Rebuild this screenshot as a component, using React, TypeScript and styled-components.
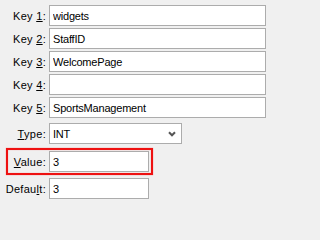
import React from "react";
import styled, { createGlobalStyle } from "styled-components";

const GlobalStyle = createGlobalStyle`
  html, body {
    margin: 0;
    padding: 0;
    background: #f0f0f0;
  }
  body {
    font-family: "Liberation Sans", Arial, sans-serif;
    font-size: 11px;
    color: #000;
  }
`;

type Field = { label: React.ReactNode; value: string };

const keys: Field[] = [
  { label: <>Key <u>1</u>:</>, value: "widgets" },
  { label: <>Key <u>2</u>:</>, value: "StaffID" },
  { label: <>Key <u>3</u>:</>, value: "WelcomePage" },
  { label: <>Key <u>4</u>:</>, value: "" },
  { label: <>Key <u>5</u>:</>, value: "SportsManagement" },
];

const App = () => {
  return (
    <>
      <GlobalStyle />
      <Form>
        {keys.map((k, i) => (
          <Row key={i} $top={i === 0 ? 5 : 2}>
            <Label>{k.label}</Label>
            <TextBox $width={217} defaultValue={k.value} />
          </Row>
        ))}
        <Row $top={5}>
          <Label>
            <u>T</u>ype:
          </Label>
          <Select>
            <span>INT</span>
            <svg width="8" height="6" viewBox="0 0 8 6">
              <path d="M1 1.2 L4 4.3 L7 1.2" fill="none" stroke="#555" strokeWidth="2" />
            </svg>
          </Select>
        </Row>
        <Row $top={7} $highlight>
          <Label>
            <u>V</u>alue:
          </Label>
          <TextBox $width={100} defaultValue="3" />
        </Row>
        <Row $top={6}>
          <Label>
            Defau<u>l</u>t:
          </Label>
          <TextBox $width={100} defaultValue="3" />
        </Row>
      </Form>
    </>
  );
};
export default App;

// styled-components -----------------
const Form = styled.div`
  display: flex;
  flex-direction: column;
  width: 271px;
`;

const Row = styled.div<{ $top: number; $highlight?: boolean }>`
  position: relative;
  display: grid;
  grid-template-columns: 47px auto;
  column-gap: 2px;
  align-items: center;
  justify-content: start;
  margin-top: ${(p) => p.$top}px;
  height: 21px;

  ${(p) =>
    p.$highlight &&
    `
    &::after {
      content: "";
      position: absolute;
      left: 6px;
      top: -3px;
      width: 143px;
      height: 23px;
      border: 2px solid #ee1111;
      box-shadow: 0 0 1px rgba(255, 40, 40, 0.6), inset 0 0 1px rgba(255, 40, 40, 0.6);
      pointer-events: none;
    }
  `}
`;

const Label = styled.label`
  text-align: right;
  padding-right: 1px;
  white-space: nowrap;
  letter-spacing: 0.3px;
  color: #000;

  u {
    text-decoration: underline;
    text-underline-offset: 1px;
  }
`;

const TextBox = styled.input<{ $width: number }>`
  box-sizing: border-box;
  width: ${(p) => p.$width}px;
  height: 21px;
  margin: 0;
  padding: 0 2px 0 3px;
  border: 1px solid #acacac;
  background: #fff;
  font-family: "Liberation Sans", Arial, sans-serif;
  font-size: 11px;
  letter-spacing: -0.2px;
  color: #000;
  outline: none;
`;

const Select = styled.div`
  box-sizing: border-box;
  width: 133px;
  height: 21px;
  display: flex;
  align-items: center;
  justify-content: space-between;
  padding: 0 5px 0 3px;
  border: 1px solid #acacac;
  background: #fff;
  font-size: 11px;
  letter-spacing: -0.2px;

  svg {
    display: block;
  }
`;
